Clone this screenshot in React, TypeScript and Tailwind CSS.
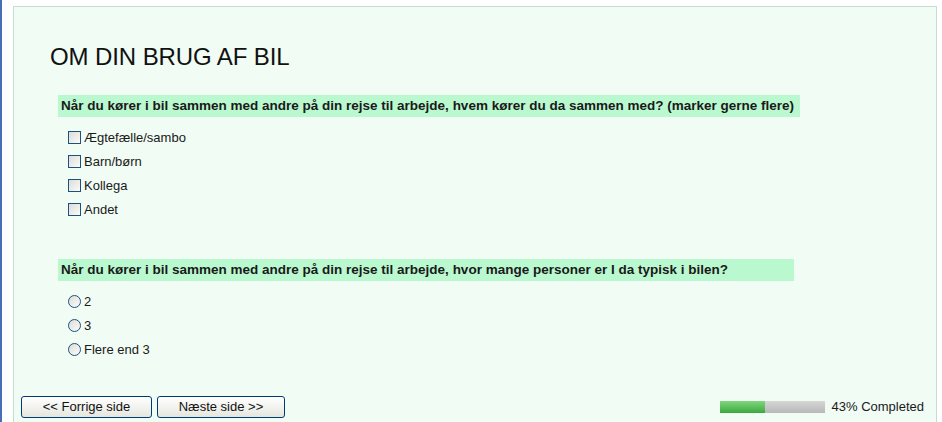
const checks = ["Ægtefælle/sambo", "Barn/børn", "Kollega", "Andet"];
const radios = ["2", "3", "Flere end 3"];

function Box() {
  return (
    <span className="inline-block shrink-0 w-[13px] h-[13px] border border-[#1c5180] bg-gradient-to-br from-[#dcdcd7] to-[#fbfbf9] mr-[3px]" />
  );
}

function Radio() {
  return (
    <span className="inline-block shrink-0 w-[13px] h-[13px] rounded-full border border-[#1c5180] bg-gradient-to-br from-[#dcdcd7] to-[#fbfbf9] mr-[3px]" />
  );
}

export default function App() {
  return (
    <div className="w-[942px] h-[422px] flex bg-white font-['Liberation_Sans',Arial,sans-serif] overflow-hidden">
      <div className="w-[2px] h-full bg-[#4a6db8]" />
      <div className="flex-1 pl-[11px] pt-[6px] pr-[5px]">
        <div className="h-full border-l border-t border-r border-[#c6ddcf] bg-[#f0fcf4] flex flex-col">
          <h1 className="text-[24px] leading-[28px] text-[#111] ml-[36px] mt-[36px] tracking-[-0.1px]">OM DIN BRUG AF BIL</h1>

          <div className="ml-[44px] mt-[24px] w-[742px] h-[22px] bg-[#baf9d0] flex items-center pl-[3px] text-[13.5px] font-bold text-[#1a1a1a] whitespace-nowrap">
            Når du kører i bil sammen med andre på din rejse til arbejde, hvem kører du da sammen med? (marker gerne flere)
          </div>
          <div className="ml-[54px] mt-[14px] flex flex-col gap-[11px]">
            {checks.map((c) => (
              <label key={c} className="flex items-center h-[13px] text-[13px] text-[#1a1a1a]">
                <Box />
                {c}
              </label>
            ))}
          </div>

          <div className="ml-[44px] mt-[43px] w-[736px] h-[22px] bg-[#baf9d0] flex items-center pl-[3px] text-[13.5px] font-bold text-[#1a1a1a] whitespace-nowrap">
            Når du kører i bil sammen med andre på din rejse til arbejde, hvor mange personer er I da typisk i bilen?
          </div>
          <div className="ml-[54px] mt-[14px] flex flex-col gap-[11px]">
            {radios.map((r) => (
              <label key={r} className="flex items-center h-[13px] text-[13px] text-[#1a1a1a]">
                <Radio />
                {r}
              </label>
            ))}
          </div>

          <div className="mt-auto mb-[4px] flex items-center pl-[7px] pr-[12px]">
            <button className="w-[131px] h-[22px] rounded-[3px] border border-[#003c74] bg-gradient-to-b from-white to-[#e6e6e0] text-[13px] text-[#111]">
              &lt;&lt; Forrige side
            </button>
            <button className="ml-[5px] w-[128px] h-[22px] rounded-[3px] border border-[#003c74] bg-gradient-to-b from-white to-[#e6e6e0] text-[13px] text-[#111]">
              Næste side &gt;&gt;
            </button>
            <div className="ml-auto flex items-center">
              <div className="w-[105px] h-[12px] flex bg-gradient-to-b from-[#d6d6d6] to-[#b8b8b8]">
                <div className="w-[45px] h-full bg-gradient-to-b from-[#7fd67f] to-[#3aa83a]" />
              </div>
              <span className="ml-[7px] text-[13px] text-[#1a1a1a]">43% Completed</span>
            </div>
          </div>
        </div>
      </div>
    </div>
  );
}
